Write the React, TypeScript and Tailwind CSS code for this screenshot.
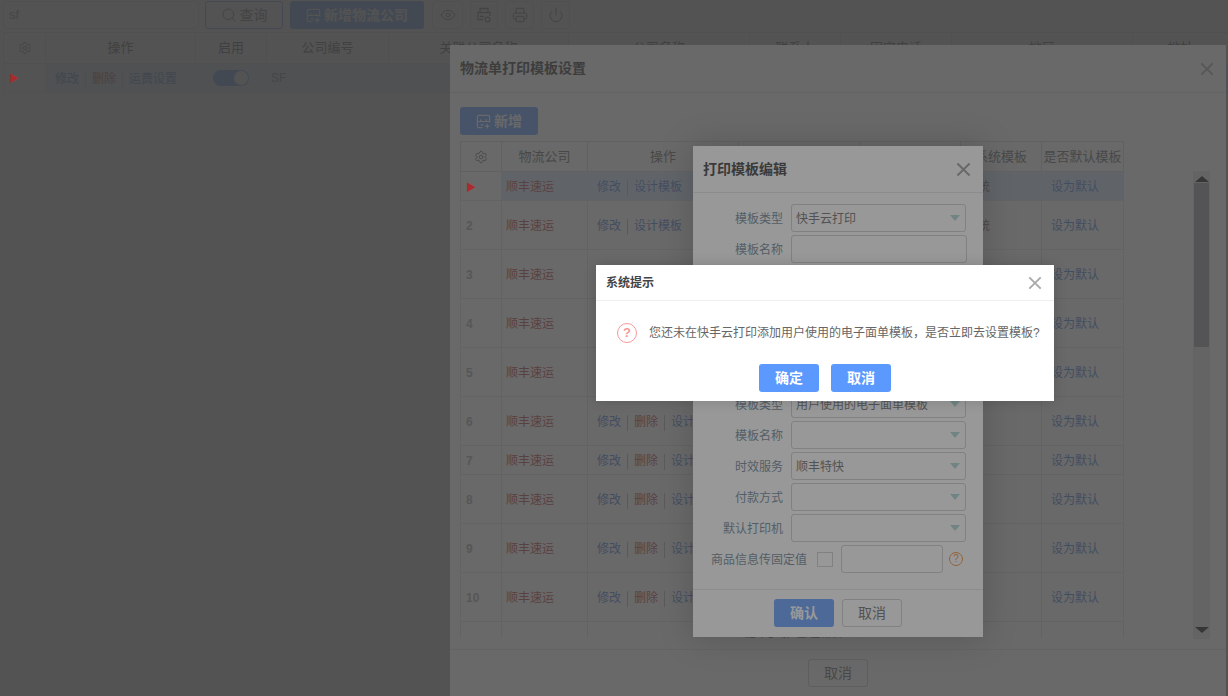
import { Fragment, type ReactNode } from "react";
import { Eye, Power, Printer, Search, Settings } from "lucide-react";

const font = "font-['Liberation_Sans','Noto_Sans_CJK_SC',sans-serif]";
const overlay = "absolute inset-0 bg-[#404040]/[0.54]";

function SaveIcon({ className }: { className?: string }) {
  return (
    <svg viewBox="0 0 16 16" fill="none" stroke="currentColor" strokeWidth="1.3" className={className}>
      <path d="M7 14.500H3A1.500 1.500 0 0 1 1.500 13V3A1.500 1.500 0 0 1 3 1.500h10A1.500 1.500 0 0 1 14.500 3v6" />
      <path d="M1.500 8h13M5 8V5.500M11 8V5.500M5 11.500h3" />
      <path d="M12 10.500v5M9.500 13h5" />
    </svg>
  );
}

function Close({ className }: { className: string }) {
  return (
    <svg viewBox="0 0 16 16" fill="none" stroke="currentColor" strokeWidth="2.2" className={className}>
      <path d="M1.500 1.500l13 13M14.500 1.500l-13 13" />
    </svg>
  );
}

function Question({ className }: { className: string }) {
  return (
    <span className={`flex items-center justify-center rounded-full border-[1.5px] leading-none ${className}`}>?</span>
  );
}

function Select({ value = "" }: { value?: string }) {
  return (
    <div className="flex h-[28px] w-[175px] items-center justify-between rounded-[3px] border border-[#ccc] bg-white pl-[4px] pr-[5px] text-[12px] text-[#666]">
      <span className="truncate pt-[2px]">{value}</span>
      <span className="h-0 w-0 border-x-[5px] border-t-[6px] border-x-transparent border-t-[#a9d4d4]" />
    </div>
  );
}

function Field({ label, children }: { label: string; children: ReactNode }) {
  return (
    <div className="flex items-center">
      <label className="w-[98px] shrink-0 pr-[8px] pt-[2px] text-right text-[12px] text-[#6a7f94]">{label}</label>
      {children}
    </div>
  );
}

const sep = <span className="mx-[6px] inline-block h-[16px] w-px bg-[#bbb] align-middle" />;

const rows = [
  { n: "", h: 29, del: false, sel: true },
  { n: "2", h: 49, del: false },
  { n: "3", h: 49, del: false },
  { n: "4", h: 49, del: false },
  { n: "5", h: 49, del: false },
  { n: "6", h: 49, del: true },
  { n: "7", h: 29, del: true },
  { n: "8", h: 49, del: true },
  { n: "9", h: 49, del: true },
  { n: "10", h: 49, del: true },
  { n: "11", h: 49, del: true },
];

export default function App() {
  return (
    <div className={`relative h-[696px] w-[1228px] overflow-hidden bg-white ${font}`}>
      {/* page */}
      <div className="px-[3px] pt-[1px]">
        <div className="flex items-center">
          <div className="flex h-[28px] w-[196px] items-center rounded-[3px] border border-[#e4e4e4] pl-[5px] text-[13px] text-[#777]">sf</div>
          <button className="ml-[6px] flex h-[28px] w-[78px] items-center justify-center gap-[3px] rounded-[3px] border border-[#5b99ff] text-[14px] text-[#666]">
            <Search className="h-[16px] w-[16px]" strokeWidth={1.5} />
            查询
          </button>
          <button className="ml-[7px] flex h-[28px] w-[134px] items-center justify-center gap-[3px] rounded-[3px] bg-[#5b99ff] text-[14px] font-bold text-white">
            <SaveIcon className="h-[15px] w-[15px]" />新增物流公司
          </button>
          <div className="ml-[8px] flex items-center text-[#666]">
            <div className="flex h-[28px] w-[31px] items-center justify-center rounded-[3px] border border-[#e4e4e4]">
              <Eye className="h-[16px] w-[16px]" strokeWidth={1.5} />
            </div>
            <div className="ml-[7px] flex h-[28px] w-[28px] items-center justify-center rounded-[3px] border border-[#e4e4e4]">
              <svg viewBox="0 0 16 16" fill="none" stroke="currentColor" strokeWidth="1.300" className="h-[16px] w-[16px]">
                <path d="M4 5V1.500h8V5M7 12.500H2V5.500h12V9M4 9.500h4" />
                <circle cx="11.500" cy="12.500" r="2.300" />
              </svg>
            </div>
            <div className="ml-[7px] flex h-[28px] w-[29px] items-center justify-center rounded-[3px] border border-[#e4e4e4]">
              <Printer className="h-[16px] w-[16px]" strokeWidth={1.5} />
            </div>
            <div className="ml-[7px] flex h-[28px] w-[29px] items-center justify-center rounded-[3px] border border-[#e4e4e4]">
              <Power className="h-[16px] w-[16px]" strokeWidth={1.5} />
            </div>
          </div>
        </div>
        <table className="mt-[3px] w-[1225px] table-fixed border-collapse text-[13px] text-[#444]">
          <colgroup>
            {[42, 150, 71, 122, 180, 181, 91, 111, 181, 96].map((w, i) => (
              <col key={i} style={{ width: w }} />
            ))}
          </colgroup>
          <thead>
            <tr className="h-[31px]">
              <th className="border border-[#e4e4e4] font-normal text-[#666]"><span className="flex justify-center"><Settings className="h-[14px] w-[14px]" strokeWidth={1.5} /></span></th>
              {["操作", "启用", "公司编号", "关联公司名称", "公司名称", "联系人", "固定电话", "地区", "地址"].map((t) => (
                <th key={t} className="border border-[#e4e4e4] font-normal">{t}</th>
              ))}
            </tr>
          </thead>
          <tbody>
            <tr className="h-[29px] text-[12px]">
              <td className="border border-[#eee] pl-[5px] text-[10px]"><span className="relative z-10 text-[#a82c2c]">▶</span></td>
              <td colSpan={9} className="bg-[#d8ebff]">
                <div className="flex items-center">
                  <div className="w-[150px] pl-[9px] pt-[2px] text-[#4f7fd8]">
                    修改<span className="mx-[6px] inline-block h-[16px] w-px bg-[#ccc] align-middle" /><span className="text-[#bb4444]">删除</span><span className="mx-[6px] inline-block h-[16px] w-px bg-[#ccc] align-middle" />运费设置
                  </div>
                  <div className="flex w-[71px] justify-center pr-[2px]">
                    <span className="flex h-[16px] w-[36px] items-center justify-end rounded-full bg-[#5b99ff] pr-[1px]">
                      <span className="h-[14px] w-[14px] rounded-full bg-white" />
                    </span>
                  </div>
                  <div className="pl-[4px] text-[#777]">SF</div>
                </div>
              </td>
            </tr>
          </tbody>
        </table>
      </div>
      <div className={overlay} />

      {/* print template settings */}
      <div className="absolute left-[450px] top-[45px] h-[651px] w-[776px] bg-white">
        <div className="flex h-[48px] items-center justify-between border-b border-[#e8e8e8] pl-[10px] pr-[12px]">
          <span className="text-[14px] font-bold text-[#333]">物流单打印模板设置</span>
          <Close className="h-[14px] w-[14px] text-[#aaa]" />
        </div>
        <div className="relative h-[556px] px-[10px] pt-[14px]">
          <button className="flex h-[28px] w-[78px] items-center justify-center gap-[3px] rounded-[3px] bg-[#5b99ff] text-[14px] font-bold text-white">
            <SaveIcon className="h-[15px] w-[15px]" />新增
          </button>
          <div className="mt-[6px] h-[497px] w-[664px] overflow-hidden">
            <table className="w-[663px] table-fixed border-collapse text-[12px] text-[#666] [&_td]:pt-[2px]">
              <colgroup>
                {[41, 86, 151, 122, 100, 81, 82].map((w, i) => (
                  <col key={i} style={{ width: w }} />
                ))}
              </colgroup>
              <thead>
                <tr className="h-[30px] text-[13px]">
                  <th className="border border-[#dcdcdc] font-normal text-[#666]"><span className="flex justify-center"><Settings className="h-[14px] w-[14px]" strokeWidth={1.5} /></span></th>
                  {["物流公司", "操作", "模板名称", "模板类型", "系统模板", "是否默认模板"].map((t) => (
                    <th key={t} className="border border-[#dcdcdc] font-normal">{t}</th>
                  ))}
                </tr>
              </thead>
              <tbody>
                {rows.map((r, i) => (
                  <tr key={i} style={{ height: r.h }}>
                    <td className="border border-[#e4e4e4] pl-[5px] font-bold text-[#aaa]">
                      {r.sel ? <span className="relative z-10 text-[10px] font-normal text-[#a82c2c]">▶</span> : r.n}
                    </td>
                    <td className={`border border-[#e4e4e4] pl-[4px] text-[#bb4444] ${r.sel ? "bg-[#d8ebff]" : ""}`}>顺丰速运</td>
                    <td className={`whitespace-nowrap border border-[#e4e4e4] pl-[9px] text-[#4f7fd8] ${r.sel ? "bg-[#d8ebff]" : ""}`}>
                      修改{sep}
                      {r.del && <Fragment><span className="text-[#bb4444]">删除</span>{sep}</Fragment>}
                      设计模板
                    </td>
                    <td className={`border border-[#e4e4e4] pl-[5px] align-top ${r.sel ? "bg-[#d8ebff]" : ""}`}>
                      {i === 10 && <span className="relative top-[8px]">顺丰标准-寄付现结</span>}
                    </td>
                    <td className={`border border-[#e4e4e4] ${r.sel ? "bg-[#d8ebff]" : ""}`} />
                    <td className={`border border-[#e4e4e4] pl-[5px] ${r.sel ? "bg-[#d8ebff]" : ""}`}>{i < 2 ? "系统" : ""}</td>
                    <td className={`border border-[#e4e4e4] pl-[9px] text-[#4f7fd8] ${r.sel ? "bg-[#d8ebff]" : ""}`}>设为默认</td>
                  </tr>
                ))}
              </tbody>
            </table>
          </div>
          {/* scrollbar */}
          <div className="absolute left-[743px] top-[78px] flex h-[468px] w-[17px] flex-col items-center bg-[#ececec]">
            <span className="mt-[5px] h-0 w-0 border-x-[7px] border-b-[6px] border-x-transparent border-b-[#111]" />
            <div className="mt-[1px] h-[164px] w-[15px] bg-[#9d9da8]" />
            <span className="mb-[6px] mt-auto h-0 w-0 border-x-[7px] border-t-[6px] border-x-transparent border-t-[#111]" />
          </div>
        </div>
        <div className="flex h-[47px] justify-center border-t border-[#e8e8e8] pt-[9px]">
          <button className="h-[28px] w-[60px] rounded-[3px] border border-[#ccc] text-[14px] text-[#666]">取消</button>
        </div>
      </div>
      <div className={overlay} />

      {/* template edit */}
      <div className="absolute left-[693px] top-[146px] h-[491px] w-[290px] bg-white shadow-[0_0_30px_rgba(0,0,0,0.25)]">
        <div className="flex h-[47px] items-center justify-between border-b border-[#e4e4e4] pl-[10px] pr-[12px]">
          <span className="text-[14px] font-bold text-[#333]">打印模板编辑</span>
          <Close className="h-[15px] w-[15px] text-[#999]" />
        </div>
        <div className="flex h-[396px] flex-col gap-[3px] pt-[11px]">
          <Field label="模板类型"><Select value="快手云打印" /></Field>
          <Field label="模板名称"><div className="h-[28px] w-[176px] rounded-[3px] border border-[#ccc]" /></Field>
          <div className="h-[121px]" />
          <Field label="模板类型"><Select value="用户使用的电子面单模板" /></Field>
          <Field label="模板名称"><Select /></Field>
          <Field label="时效服务"><Select value="顺丰特快" /></Field>
          <Field label="付款方式"><Select /></Field>
          <Field label="默认打印机"><Select /></Field>
          <div className="flex items-center">
            <label className="w-[114px] shrink-0 pt-[2px] text-right text-[12px] text-[#6a7f94]">商品信息传固定值</label>
            <span className="ml-[10px] h-[15px] w-[16px] border border-[#ccc]" />
            <div className="ml-[8px] h-[28px] w-[102px] rounded-[3px] border border-[#ccc]" />
            <Question className="ml-[6px] h-[14px] w-[14px] border-[#f08a30] text-[10px] text-[#f08a30]" />
          </div>
        </div>
        <div className="flex h-[48px] justify-center gap-[8px] border-t border-[#e4e4e4] pt-[9px]">
          <button className="h-[28px] w-[60px] rounded-[3px] bg-[#5b99ff] text-[14px] font-bold text-white">确认</button>
          <button className="h-[28px] w-[60px] rounded-[3px] border border-[#ccc] text-[14px] text-[#666]">取消</button>
        </div>
      </div>
      <div className={overlay} />

      {/* system prompt */}
      <div className="absolute left-[596px] top-[265px] h-[136px] w-[458px] bg-white shadow-[0_0_12px_rgba(0,0,0,0.15)]">
        <div className="flex h-[36px] items-center justify-between border-b border-[#eee] pl-[10px] pr-[12px]">
          <span className="text-[12px] font-bold text-[#444]">系统提示</span>
          <Close className="h-[14px] w-[14px] text-[#aaa]" />
        </div>
        <div className="flex h-[63px] items-center pl-[21px]">
          <Question className="h-[20px] w-[20px] border-[#f59a9a] text-[13px] font-bold text-[#f59a9a]" />
          <span className="ml-[12px] whitespace-nowrap text-[12px] text-[#666]">您还未在快手云打印添加用户使用的电子面单模板，是否立即去设置模板?</span>
        </div>
        <div className="flex justify-center gap-[12px]">
          <button className="h-[28px] w-[60px] rounded-[3px] bg-[#5b99ff] text-[14px] font-bold text-white">确定</button>
          <button className="h-[28px] w-[60px] rounded-[3px] bg-[#5b99ff] text-[14px] font-bold text-white">取消</button>
        </div>
      </div>
    </div>
  );
}
